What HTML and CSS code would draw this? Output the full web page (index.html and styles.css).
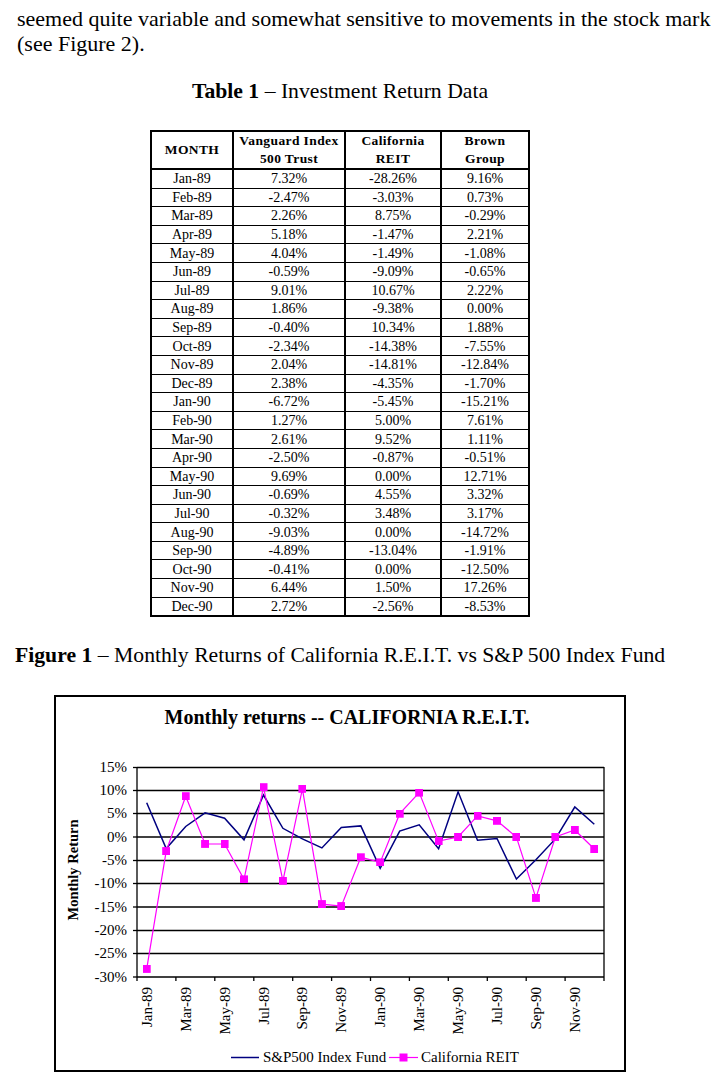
FILE: index.html
```html
<!DOCTYPE html>
<html>
<head>
<meta charset="utf-8">
<link rel="stylesheet" href="styles.css">
</head>
<body>
<div class="page">
  <p class="intro"><span class="line">seemed quite variable and somewhat sensitive to movements in the stock market</span><span class="line">(see Figure 2).</span></p>

  <p class="caption table-caption"><b>Table 1</b> – Investment Return Data</p>

  <table class="data-table">
    <colgroup>
      <col class="c-month"><col class="c-vang"><col class="c-cal"><col class="c-brown">
    </colgroup>
    <thead>
      <tr>
        <th>MONTH</th>
        <th>Vanguard Index<br>500 Trust</th>
        <th>California<br>REIT</th>
        <th>Brown<br>Group</th>
      </tr>
    </thead>
    <tbody>
      <tr><td>Jan-89</td><td>7.32%</td><td>-28.26%</td><td>9.16%</td></tr>
      <tr><td>Feb-89</td><td>-2.47%</td><td>-3.03%</td><td>0.73%</td></tr>
      <tr><td>Mar-89</td><td>2.26%</td><td>8.75%</td><td>-0.29%</td></tr>
      <tr><td>Apr-89</td><td>5.18%</td><td>-1.47%</td><td>2.21%</td></tr>
      <tr><td>May-89</td><td>4.04%</td><td>-1.49%</td><td>-1.08%</td></tr>
      <tr><td>Jun-89</td><td>-0.59%</td><td>-9.09%</td><td>-0.65%</td></tr>
      <tr><td>Jul-89</td><td>9.01%</td><td>10.67%</td><td>2.22%</td></tr>
      <tr><td>Aug-89</td><td>1.86%</td><td>-9.38%</td><td>0.00%</td></tr>
      <tr><td>Sep-89</td><td>-0.40%</td><td>10.34%</td><td>1.88%</td></tr>
      <tr><td>Oct-89</td><td>-2.34%</td><td>-14.38%</td><td>-7.55%</td></tr>
      <tr><td>Nov-89</td><td>2.04%</td><td>-14.81%</td><td>-12.84%</td></tr>
      <tr><td>Dec-89</td><td>2.38%</td><td>-4.35%</td><td>-1.70%</td></tr>
      <tr><td>Jan-90</td><td>-6.72%</td><td>-5.45%</td><td>-15.21%</td></tr>
      <tr><td>Feb-90</td><td>1.27%</td><td>5.00%</td><td>7.61%</td></tr>
      <tr><td>Mar-90</td><td>2.61%</td><td>9.52%</td><td>1.11%</td></tr>
      <tr><td>Apr-90</td><td>-2.50%</td><td>-0.87%</td><td>-0.51%</td></tr>
      <tr><td>May-90</td><td>9.69%</td><td>0.00%</td><td>12.71%</td></tr>
      <tr><td>Jun-90</td><td>-0.69%</td><td>4.55%</td><td>3.32%</td></tr>
      <tr><td>Jul-90</td><td>-0.32%</td><td>3.48%</td><td>3.17%</td></tr>
      <tr><td>Aug-90</td><td>-9.03%</td><td>0.00%</td><td>-14.72%</td></tr>
      <tr><td>Sep-90</td><td>-4.89%</td><td>-13.04%</td><td>-1.91%</td></tr>
      <tr><td>Oct-90</td><td>-0.41%</td><td>0.00%</td><td>-12.50%</td></tr>
      <tr><td>Nov-90</td><td>6.44%</td><td>1.50%</td><td>17.26%</td></tr>
      <tr><td>Dec-90</td><td>2.72%</td><td>-2.56%</td><td>-8.53%</td></tr>
    </tbody>
  </table>

  <p class="caption figure-caption"><b>Figure 1</b> – Monthly Returns of California R.E.I.T. vs S&amp;P 500 Index Fund</p>

  <div class="chart">
    <svg class="chart-svg" width="568" height="373" viewBox="56 697 568 373" xmlns="http://www.w3.org/2000/svg">
      <defs>
        <marker id="sq" markerWidth="8" markerHeight="8" refX="4" refY="4" markerUnits="userSpaceOnUse">
          <rect x="0" y="0" width="8" height="8" fill="#ff00ff"/>
        </marker>
      </defs>
      <text class="chart-title" x="347" y="724" text-anchor="middle">Monthly returns -- CALIFORNIA R.E.I.T.</text>

      <g class="grid">
        <line x1="137" y1="767.5" x2="604" y2="767.5"/>
        <line x1="137" y1="790.5" x2="604" y2="790.5"/>
        <line x1="137" y1="813.5" x2="604" y2="813.5"/>
        <line x1="137" y1="837" x2="604" y2="837"/>
        <line x1="137" y1="860.5" x2="604" y2="860.5"/>
        <line x1="137" y1="883.5" x2="604" y2="883.5"/>
        <line x1="137" y1="907" x2="604" y2="907"/>
        <line x1="137" y1="930.5" x2="604" y2="930.5"/>
        <line x1="137" y1="953.5" x2="604" y2="953.5"/>
        <line x1="137" y1="977" x2="604" y2="977"/>
        <line x1="137" y1="767" x2="137" y2="977"/>
        <line x1="604" y1="767" x2="604" y2="981"/>
        <line x1="133" y1="767.5" x2="137" y2="767.5"/>
        <line x1="133" y1="790.5" x2="137" y2="790.5"/>
        <line x1="133" y1="813.5" x2="137" y2="813.5"/>
        <line x1="133" y1="837" x2="137" y2="837"/>
        <line x1="133" y1="860.5" x2="137" y2="860.5"/>
        <line x1="133" y1="883.5" x2="137" y2="883.5"/>
        <line x1="133" y1="907" x2="137" y2="907"/>
        <line x1="133" y1="930.5" x2="137" y2="930.5"/>
        <line x1="133" y1="953.5" x2="137" y2="953.5"/>
        <line x1="133" y1="977" x2="137" y2="977"/>
        <line x1="137" y1="977" x2="137" y2="981"/>
        <line x1="175.9" y1="977" x2="175.9" y2="981"/>
        <line x1="214.8" y1="977" x2="214.8" y2="981"/>
        <line x1="253.8" y1="977" x2="253.8" y2="981"/>
        <line x1="292.7" y1="977" x2="292.7" y2="981"/>
        <line x1="331.6" y1="977" x2="331.6" y2="981"/>
        <line x1="370.5" y1="977" x2="370.5" y2="981"/>
        <line x1="409.4" y1="977" x2="409.4" y2="981"/>
        <line x1="448.3" y1="977" x2="448.3" y2="981"/>
        <line x1="487.3" y1="977" x2="487.3" y2="981"/>
        <line x1="526.2" y1="977" x2="526.2" y2="981"/>
        <line x1="565.1" y1="977" x2="565.1" y2="981"/>
      </g>

      <g class="y-labels" text-anchor="end">
        <text x="127" y="772">15%</text>
        <text x="127" y="795">10%</text>
        <text x="127" y="818">5%</text>
        <text x="127" y="842">0%</text>
        <text x="127" y="865">-5%</text>
        <text x="127" y="888">-10%</text>
        <text x="127" y="912">-15%</text>
        <text x="127" y="935">-20%</text>
        <text x="127" y="958">-25%</text>
        <text x="127" y="982">-30%</text>
      </g>

      <text class="axis-title" transform="translate(78 870) rotate(-90)" text-anchor="middle">Monthly Return</text>

      <g class="x-labels" text-anchor="end">
        <text transform="translate(151.7 987) rotate(-90)">Jan-89</text>
        <text transform="translate(190.6 987) rotate(-90)">Mar-89</text>
        <text transform="translate(229.6 987) rotate(-90)">May-89</text>
        <text transform="translate(268.5 987) rotate(-90)">Jul-89</text>
        <text transform="translate(307.4 987) rotate(-90)">Sep-89</text>
        <text transform="translate(346.3 987) rotate(-90)">Nov-89</text>
        <text transform="translate(385.2 987) rotate(-90)">Jan-90</text>
        <text transform="translate(424.1 987) rotate(-90)">Mar-90</text>
        <text transform="translate(463.1 987) rotate(-90)">May-90</text>
        <text transform="translate(502.0 987) rotate(-90)">Jul-90</text>
        <text transform="translate(540.9 987) rotate(-90)">Sep-90</text>
        <text transform="translate(579.8 987) rotate(-90)">Nov-90</text>
      </g>

      <polyline class="sp" points="146.7,802.8 166.2,848.5 185.7,826.5 205.1,812.8 224.6,818.2 244.0,839.8 263.5,795.0 282.9,828.3 302.4,838.9 321.9,847.9 341.3,827.5 360.8,825.9 380.2,868.4 399.7,831.1 419.2,824.8 438.6,848.7 458.1,791.8 477.5,840.2 497.0,838.5 516.4,879.1 535.9,859.8 555.4,838.9 574.8,807.0 594.3,824.3"/>
      <polyline class="reit" points="146.7,968.9 166.2,851.1 185.7,796.2 205.1,843.9 224.6,844.0 244.0,879.4 263.5,787.2 282.9,880.8 302.4,788.8 321.9,904.1 341.3,906.1 360.8,857.3 380.2,862.4 399.7,813.7 419.2,792.6 438.6,841.1 458.1,837.0 477.5,815.8 497.0,820.8 516.4,837.0 535.9,897.9 555.4,837.0 574.8,830.0 594.3,849.0"/>

      <g class="legend">
        <line class="legend-sp" x1="231" y1="1057.5" x2="259" y2="1057.5"/>
        <text x="263" y="1062">S&amp;P500 Index Fund</text>
        <line class="legend-reit" x1="389" y1="1057.5" x2="418" y2="1057.5"/>
        <rect x="399.5" y="1053.5" width="8" height="8" fill="#ff00ff"/>
        <text x="421" y="1062">California REIT</text>
      </g>
    </svg>
  </div>
</div>
</body>
</html>
```

FILE: styles.css
```css
html, body {
  margin: 0;
  padding: 0;
  background: #ffffff;
}

body {
  font-family: "Liberation Serif", "Times New Roman", serif;
  color: #000000;
  overflow: hidden;
}

.page {
  width: 650px;
  margin-left: 15px;
}

.intro {
  margin: 6px 0 0 2px;
  font-size: 22px;
  line-height: 25px;
  white-space: nowrap;
}

.intro .line {
  display: block;
}

.caption {
  font-size: 21.7px;
  line-height: 26px;
  margin: 0;
}

.table-caption {
  text-align: center;
  margin-top: 22px;
  margin-bottom: 26px;
}

.data-table {
  border-collapse: collapse;
  table-layout: fixed;
  width: 378px;
  margin: 0 auto;
  border: 2px solid #000000;
  font-size: 14px;
}

.c-month { width: 82px; }
.c-vang { width: 112px; }
.c-cal { width: 96px; }
.c-brown { width: 88px; }

.data-table th {
  height: 36px;
  padding: 0;
  font-size: 13.5px;
  line-height: 18px;
  font-weight: bold;
  letter-spacing: 0.4px;
  border: 2px solid #000000;
  text-align: center;
  vertical-align: middle;
}

.data-table td {
  height: 17.6px;
  padding: 0;
  line-height: 17px;
  text-align: center;
  border-top: 1px solid #000000;
  border-bottom: 1px solid #000000;
  border-left: 2px solid #000000;
  border-right: 2px solid #000000;
}

.figure-caption {
  margin-top: 25px;
  white-space: nowrap;
}

.chart {
  margin: 27px 0 0 39px;
  width: 568px;
  height: 373px;
  border: 2px solid #000000;
}

.chart-svg {
  display: block;
  font-family: "Liberation Serif", "Times New Roman", serif;
}

.chart-title {
  font-size: 20px;
  font-weight: bold;
}

.grid line {
  stroke: #000000;
  stroke-width: 1.3;
}

.y-labels text,
.x-labels text {
  font-size: 15px;
}

.axis-title {
  font-size: 14.5px;
  font-weight: bold;
}

.sp {
  fill: none;
  stroke: #000080;
  stroke-width: 1.5;
}

.reit {
  fill: none;
  stroke: #ff00ff;
  stroke-width: 1.2;
  marker-start: url(#sq);
  marker-mid: url(#sq);
  marker-end: url(#sq);
}

.legend text {
  font-size: 15px;
}

.legend-sp {
  stroke: #000080;
  stroke-width: 1.5;
}

.legend-reit {
  stroke: #ff00ff;
  stroke-width: 1.2;
}
```
